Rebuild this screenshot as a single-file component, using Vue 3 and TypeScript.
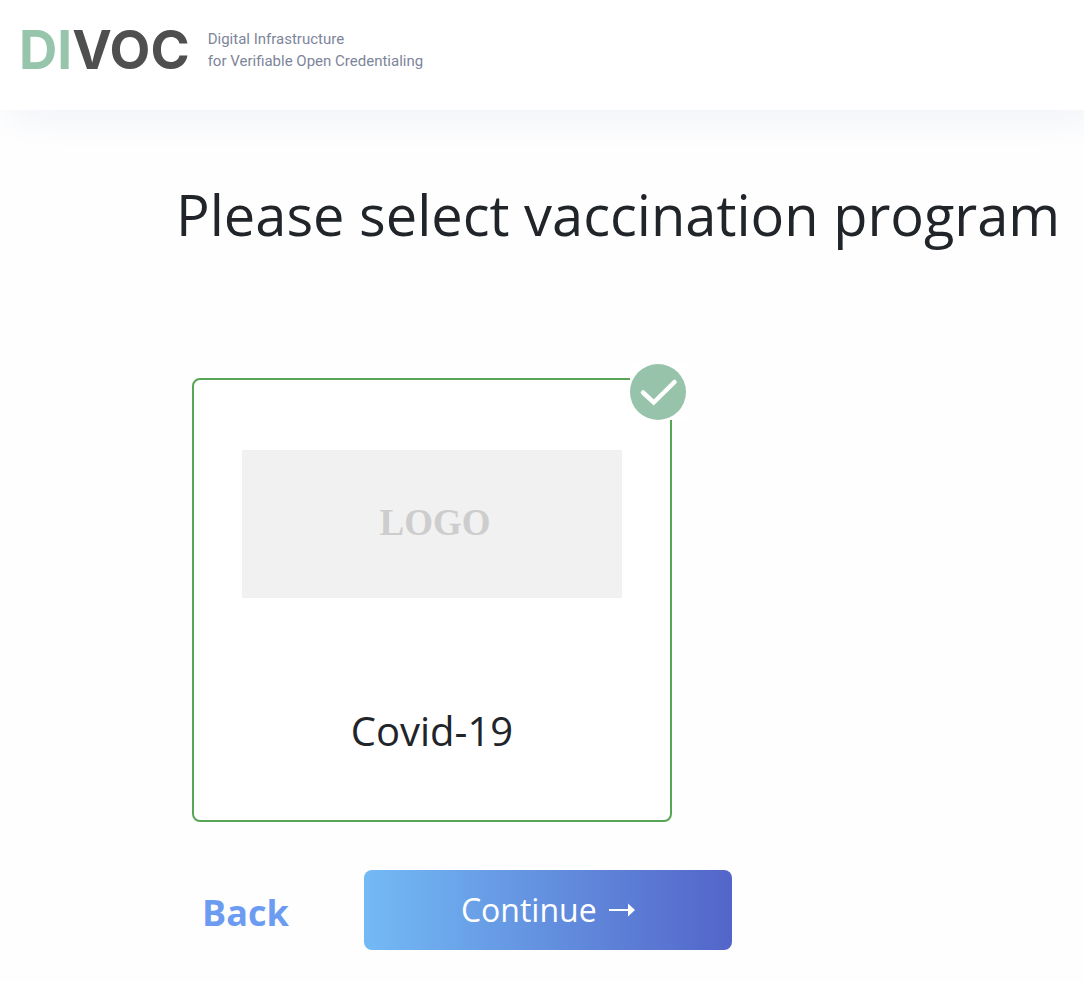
<script setup lang="ts">
import { ref } from 'vue'

interface Program {
  id: string
  name: string
}

const programs: Program[] = [{ id: 'covid-19', name: 'Covid-19' }]
const selected = ref<string>('covid-19')
</script>

<template>
  <div class="page">
    <header class="topbar">
      <div class="brand"><span class="brand-accent">DI</span>VOC</div>
      <p class="tagline">Digital Infrastructure<br />for Verifiable Open Credentialing</p>
    </header>
    <main class="content">
      <h1 class="title">Please select vaccination program</h1>
      <div class="programs">
        <label
          v-for="program in programs"
          :key="program.id"
          class="card"
          :class="{ active: selected === program.id }"
        >
          <input v-model="selected" class="choice" type="radio" name="program" :value="program.id" />
          <span class="logo">LOGO</span>
          <span class="name">{{ program.name }}</span>
          <svg v-if="selected === program.id" class="badge" viewBox="0 0 56 56" aria-hidden="true">
            <rect width="56" height="56" fill="#fff" />
            <circle cx="28" cy="28" r="28" fill="#96c3aa" />
            <path d="M13 28.5 23.7 38.5 44.5 18" fill="none" stroke="#fff" stroke-width="4.5" stroke-linecap="round" />
          </svg>
        </label>
      </div>
      <div class="actions">
        <a class="back" href="#">Back</a>
        <button class="continue" type="button">
          <span>Continue</span>
          <svg class="arrow" viewBox="0 0 26 14" aria-hidden="true">
            <path d="M0 6h19V0.500L26 7l-7 6.500V8H0z" fill="#fff" />
          </svg>
        </button>
      </div>
    </main>
  </div>
</template>

<style>
body {
  margin: 0;
  background: #fefefe;
}
</style>

<style scoped>
.page {
  font-family: "Open Sans", "Noto Sans", sans-serif;
  color: #212529;
  overflow-x: hidden;
}
.topbar {
  display: flex;
  align-items: center;
  gap: 18px;
  height: 110px;
  box-sizing: border-box;
  padding: 0 19px 10px;
  background: #fff;
  box-shadow: 12px 6px 40px #edf1f7;
}
.brand {
  font: 700 53px/62px Inter, sans-serif;
  color: #4f4f4f;
}
.brand-accent {
  color: #96c5ac;
}
.tagline {
  margin: 0;
  font: 400 15px/22px Roboto, sans-serif;
  color: #7d859a;
}
.content {
  padding: 64px 0 32px 176px;
}
.title {
  margin: 0;
  font-size: 56px;
  font-weight: 400;
  line-height: 80px;
  white-space: nowrap;
}
.programs {
  display: flex;
  padding: 124px 16px 0;
}
.card {
  position: relative;
  display: flex;
  flex-direction: column;
  align-items: center;
  box-sizing: border-box;
  width: 480px;
  padding: 70px 48px 60px;
  border: 2px solid #ced4da;
  border-radius: 8px;
  background: #fff;
  cursor: pointer;
}
.card.active {
  border-color: #57a657;
}
.choice {
  position: absolute;
  opacity: 0;
}
.logo {
  width: 100%;
  height: 148px;
  box-sizing: border-box;
  padding-left: 6px;
  background: #f1f1f1;
  color: #cdcdcd;
  font: 700 37px/146px "Liberation Serif", serif;
  text-align: center;
}
.name {
  margin-top: 104px;
  font-size: 40px;
  line-height: 58px;
}
.badge {
  position: absolute;
  top: -16px;
  right: -16px;
  width: 56px;
  height: 56px;
}
.actions {
  display: flex;
  align-items: center;
  gap: 75px;
  padding: 48px 0 0 26px;
}
.back {
  padding-top: 4px;
  color: #6c9bf2;
  font-size: 36px;
  font-weight: 700;
  text-decoration: none;
}
.continue {
  display: flex;
  align-items: center;
  justify-content: center;
  gap: 12px;
  width: 368px;
  height: 80px;
  padding: 0;
  border: 0;
  border-radius: 8px;
  background: linear-gradient(90deg, #73baf5, #5365c9);
  color: #fff;
  font: 400 32px/44px "Open Sans", sans-serif;
  cursor: pointer;
}
.arrow {
  width: 26px;
  height: 14px;
}
</style>
